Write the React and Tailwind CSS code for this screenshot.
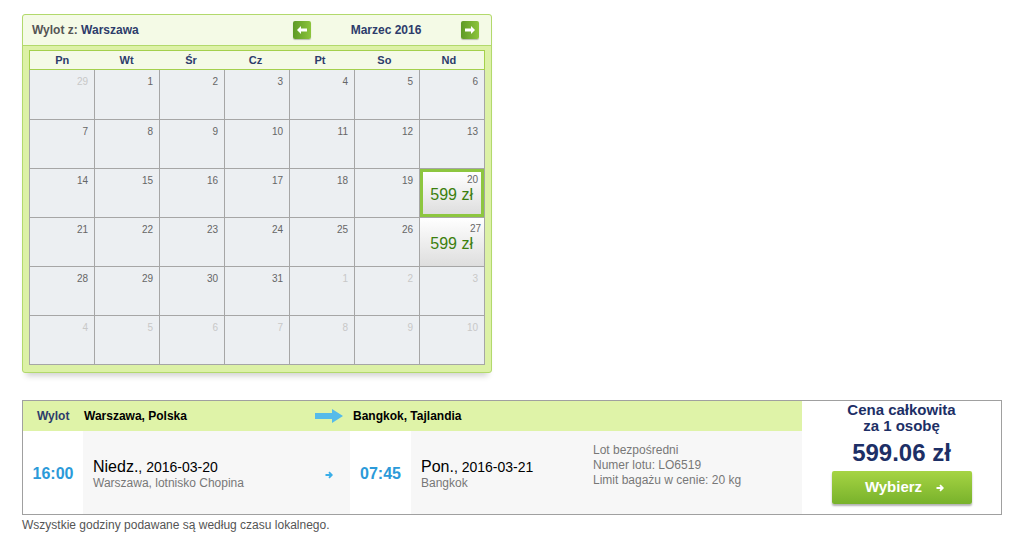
import React from 'react'

const weekDays = ['Pn', 'Wt', 'Śr', 'Cz', 'Pt', 'So', 'Nd']

// March 2016 grid, Monday first; `out` marks days from neighbouring months
const days = [
  { d: 29, out: true }, { d: 1 }, { d: 2 }, { d: 3 }, { d: 4 }, { d: 5 }, { d: 6 },
  { d: 7 }, { d: 8 }, { d: 9 }, { d: 10 }, { d: 11 }, { d: 12 }, { d: 13 },
  { d: 14 }, { d: 15 }, { d: 16 }, { d: 17 }, { d: 18 }, { d: 19 }, { d: 20, price: '599 zł', selected: true },
  { d: 21 }, { d: 22 }, { d: 23 }, { d: 24 }, { d: 25 }, { d: 26 }, { d: 27, price: '599 zł' },
  { d: 28 }, { d: 29 }, { d: 30 }, { d: 31 }, { d: 1, out: true }, { d: 2, out: true }, { d: 3, out: true },
  { d: 4, out: true }, { d: 5, out: true }, { d: 6, out: true }, { d: 7, out: true }, { d: 8, out: true }, { d: 9, out: true }, { d: 10, out: true },
]

function NavButton({ dir }) {
  return (
    <button className="w-[18px] h-[18px] rounded-[2px] bg-gradient-to-r from-[#5e9a26] to-[#8cc43c] flex items-center justify-center shadow-[0_1px_1px_rgba(0,0,0,0.25)]">
      <svg width="10" height="8" viewBox="0 0 10 8">
        {dir === 'left' ? (
          <path d="M0 4 L4 0 L4 2.5 L10 2.5 L10 5.5 L4 5.5 L4 8 Z" fill="#fff" />
        ) : (
          <path d="M10 4 L6 0 L6 2.5 L0 2.5 L0 5.5 L6 5.5 L6 8 Z" fill="#fff" />
        )}
      </svg>
    </button>
  )
}

// small chunky arrow used next to dates and on the button
function SmallArrow({ color }) {
  return (
    <svg width="8" height="8" viewBox="0 0 8 8">
      <path d="M0.5 4 H6.5 M4 1.2 L6.8 4 L4 6.8" stroke={color} strokeWidth="1.8" fill="none" />
    </svg>
  )
}

function DayCell({ day, first }) {
  const h = first ? 'h-[49px] ' : 'h-[48px] '
  if (day.price) {
    return (
      <div
        className={
          h + 'bg-gradient-to-b from-white to-[#dedede] relative ' +
          (day.selected ? 'border-[3px] border-[#8dc63f]' : '')
        }
      >
        <div className={'absolute right-[3px] text-[10px] text-[#666] ' + (day.selected ? 'top-0' : 'top-[3px]')}>{day.d}</div>
        <div className={'absolute text-[16px] text-[#3c7f0e] ' + (day.selected ? 'right-[8px] top-[11px]' : 'right-[11px] top-[14px]')}>{day.price}</div>
      </div>
    )
  }
  return (
    <div className={h + 'bg-[#eceff2] relative'}>
      <div className={'absolute right-[6px] top-[4px] text-[10px] ' + (day.out ? 'text-[#c8c8c8]' : 'text-[#666]')}>
        {day.d}
      </div>
    </div>
  )
}

function Calendar() {
  return (
    <div className="w-[470px] border border-[#b2d96c] rounded-[3px] bg-[#dcf1a6] shadow-[0_7px_6px_-4px_rgba(0,0,0,0.18)]">
      <div className="h-[31px] bg-[#f4fae6] border-b border-[#b2d96c] flex items-center pl-[9px] pr-[12px] rounded-t-[3px]">
        <div className="text-[12px] font-bold text-[#555] w-[261px]">
          Wylot z: <span className="text-[#2d3c6b]">Warszawa</span>
        </div>
        <NavButton dir="left" />
        <div className="flex-1 text-center text-[12px] font-bold text-[#2d3c6b]">Marzec 2016</div>
        <NavButton dir="right" />
      </div>
      <div className="px-[6px] pt-[4px] pb-[7px]">
        <div className="grid grid-cols-7 bg-[#f4fae6] border border-[#a4d04c] h-[20px] items-center pr-[3px]">
          {weekDays.map((w) => (
            <div key={w} className="text-center text-[11px] font-bold text-[#2d3c6b]">{w}</div>
          ))}
        </div>
        <div className="grid grid-cols-7 gap-px bg-[#a6a6a6] px-px pb-px">
          {days.map((day, i) => (
            <DayCell key={i} day={day} first={i < 7} />
          ))}
        </div>
      </div>
    </div>
  )
}

function FlightSummary() {
  return (
    <div className="w-[980px] border border-[#a0a0a0] flex">
      <div className="w-[779px] flex flex-col">
        <div className="h-[30px] bg-[#dff3a8] flex items-center text-[12px] font-bold">
          <div className="w-[61px] pl-[14px] text-[#2d3c6b]">Wylot</div>
          <div className="w-[231px] text-black">Warszawa, Polska</div>
          <svg width="28" height="14" viewBox="0 0 28 14" className="mr-[10px]">
            <path d="M0 4 L17 4 L17 0 L28 7 L17 14 L17 10 L0 10 Z" fill="#55bbea" />
          </svg>
          <div className="text-black">Bangkok, Tajlandia</div>
        </div>
        <div className="h-[83px] flex">
          <div className="w-[60px] bg-white flex items-center justify-center text-[16px] font-bold text-[#2b9ad9] pt-[2px]">16:00</div>
          <div className="w-[267px] bg-[#f7f7f7] flex items-center pl-[10px] pr-[17px]">
            <div className="flex-1 pt-[2px]">
              <div className="text-black leading-[18px]">
                <span className="text-[16px]">Niedz.</span>
                <span className="text-[14px]">, 2016-03-20</span>
              </div>
              <div className="text-[12px] text-[#777] leading-[14px]">Warszawa, lotnisko Chopina</div>
            </div>
            <div className="pt-[4px]">
              <SmallArrow color="#3aaee8" />
            </div>
          </div>
          <div className="w-[61px] bg-white flex items-center justify-center text-[16px] font-bold text-[#2b9ad9] pt-[2px]">07:45</div>
          <div className="flex-1 bg-[#f7f7f7] flex items-center pl-[10px]">
            <div className="w-[172px] pt-[2px]">
              <div className="text-black leading-[18px]">
                <span className="text-[16px]">Pon.</span>
                <span className="text-[14px]">, 2016-03-21</span>
              </div>
              <div className="text-[12px] text-[#777] leading-[14px]">Bangkok</div>
            </div>
            <div className="text-[12px] text-[#777] leading-[15px] self-start pt-[12px]">
              <div>Lot bezpośredni</div>
              <div>Numer lotu: LO6519</div>
              <div>Limit bagażu w cenie: 20 kg</div>
            </div>
          </div>
        </div>
      </div>
      <div className="flex-1 bg-white flex flex-col items-center pt-[1px]">
        <div className="text-[15px] font-bold text-[#1d2f66] leading-[16px] text-center">
          Cena całkowita<br />za 1 osobę
        </div>
        <div className="text-[24px] font-bold text-[#1d2f66] leading-[28px] mt-[5px]">599.06 zł</div>
        <button className="mt-[4px] w-[140px] h-[33px] rounded-[2px] bg-gradient-to-b from-[#a6d443] to-[#78b22b] shadow-[0_2px_2px_rgba(0,0,0,0.3)] flex items-center justify-center gap-[14px] pl-[6px] text-white font-bold text-[15px]">
          Wybierz
          <SmallArrow color="#fff" />
        </button>
      </div>
    </div>
  )
}

export default function App() {
  return (
    <div className="w-[1015px] h-[544px] bg-white font-['Liberation_Sans',Arial,sans-serif] pl-[22px] pt-[14px]">
      <Calendar />
      <div className="mt-[27px]">
        <FlightSummary />
      </div>
      <div className="text-[12px] text-[#555] mt-[1px]">Wszystkie godziny podawane są według czasu lokalnego.</div>
    </div>
  )
}
